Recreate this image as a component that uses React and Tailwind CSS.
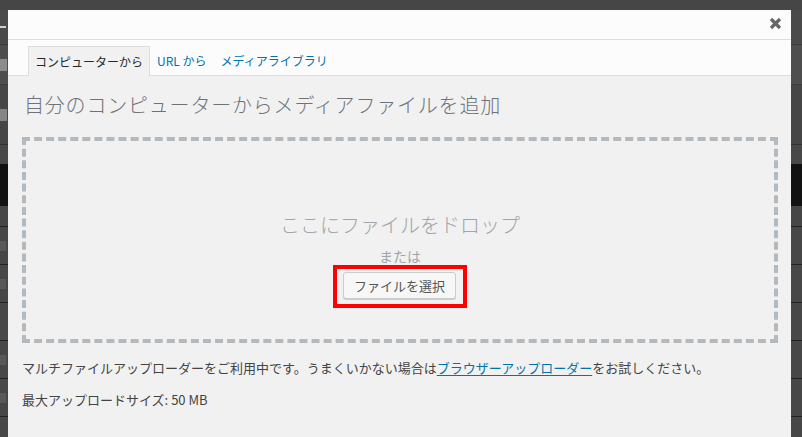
import React from 'react';

const jp = { fontFamily: '"Noto Sans CJK JP", "Noto Sans", sans-serif' };

// faint glyph fragments of the page that peek out at the left edge
const Mark = ({ w, h, c }) => <div className={`${w} ${h} ${c}`} />;

// page rows seen behind the dark overlay (left / right strips)
const BackdropRows = () => (
  <div className="flex flex-col w-full">
    <div className="h-[10px] bg-[#464646]" />
    <div className="h-[35px] bg-[#4a4a4a] border-b border-[#3c3c3c] flex items-center">
      <Mark w="w-[6px]" h="h-[2px]" c="bg-[#cfcfcf]" />
    </div>
    <div className="h-[40px] bg-[#4e4e4e] border-b border-[#3c3c3c] flex items-center">
      <Mark w="w-[7px]" h="h-[12px]" c="bg-[#8c8c8c]" />
    </div>
    <div className="h-[60px] bg-[#464646] border-b border-[#333] flex items-center">
      <Mark w="w-[7px]" h="h-[12px]" c="bg-[#858585]" />
    </div>
    <div className="h-[19px] bg-[#484848]" />
    <div className="h-[42px] bg-[#121212]" />
    <div className="h-[21px] bg-[#464646] border-b border-[#222]" />
    {[true, true, false, true, true, false, false].map((m, i) => (
      <div key={i} className="h-[38px] bg-[#474747] border-b border-[#222] flex items-center">
        {m && <Mark w="w-[6px]" h="h-[10px]" c="bg-[#585858]" />}
      </div>
    ))}
  </div>
);

const App = () => {
  return (
    <div className="relative w-[802px] h-[437px] overflow-hidden bg-[#464646]">
      <BackdropRows />

      <div
        className="absolute left-[8px] top-[10px] w-[783px] h-[440px] bg-[#f1f1f1] flex flex-col"
        style={jp}
      >
        {/* title bar */}
        <div className="h-[30px] bg-[#fcfcfc] border-b border-[#dddddd] flex items-center justify-end pr-[9px] shrink-0">
          <svg width="13" height="13" viewBox="0 0 13 13" className="mt-[-2px]">
            <path d="M2 2 L11 11 M11 2 L2 11" stroke="#666666" strokeWidth="3.2" strokeLinecap="butt" />
          </svg>
        </div>

        {/* router tabs */}
        <div className="h-[36px] bg-[#fcfcfc] border-b border-[#dddddd] flex items-end pl-[20px] shrink-0 text-[12px]">
          <div className="h-[30px] -mb-px px-[6px] border border-b-0 border-[#dddddd] bg-[#f1f1f1] flex items-center text-[#23282d]">
            コンピューターから
          </div>
          <div className="h-[30px] -mb-px px-[6px] border border-transparent flex items-center text-[#0073aa]">
            URL から
          </div>
          <div className="h-[30px] -mb-px px-[6px] border border-transparent flex items-center text-[#0073aa]">
            メディアライブラリ
          </div>
        </div>

        {/* content */}
        <div className="flex flex-col pl-[14px] pr-[13px]">
          <h2 className="mt-[14px] h-[30px] leading-[30px] text-[20px] font-light tracking-[0.8px] text-[#6e7377] pl-[2px]">
            自分のコンピューターからメディアファイルを追加
          </h2>

          <div className="mt-[17px] h-[206px] border-4 border-dashed border-[#b4b9be] flex flex-col items-center pt-[70px]">
            <p className="h-[28px] leading-[28px] text-[20px] font-light text-[#a0a5aa]">
              ここにファイルをドロップ
            </p>
            <p className="mt-[7px] h-[20px] leading-[20px] text-[14px] text-[#a0a5aa]">または</p>
            <div className="-mt-px border-4 border-[#ff0000] pl-[6px] pr-[7px] pt-[3px] pb-[5px]">
              <button className="h-[27px] px-[10px] text-[13px] text-[#555555] bg-[#f7f7f7] border border-[#cccccc] rounded-[3px] shadow-[0_1px_0_#cccccc] leading-[25px]">
                ファイルを選択
              </button>
            </div>
          </div>

          <p className="mt-[15px] h-[20px] leading-[20px] text-[13px] text-[#444444]">
            マルチファイルアップローダーをご利用中です。うまくいかない場合は
            <a className="text-[#0073aa] underline underline-offset-2">ブラウザーアップローダー</a>
            をお試しください。
          </p>
          <p className="mt-[12px] h-[20px] leading-[20px] text-[13px] text-[#444444]">
            最大アップロードサイズ: 50 MB
          </p>
        </div>
      </div>
    </div>
  );
};

export default App;
